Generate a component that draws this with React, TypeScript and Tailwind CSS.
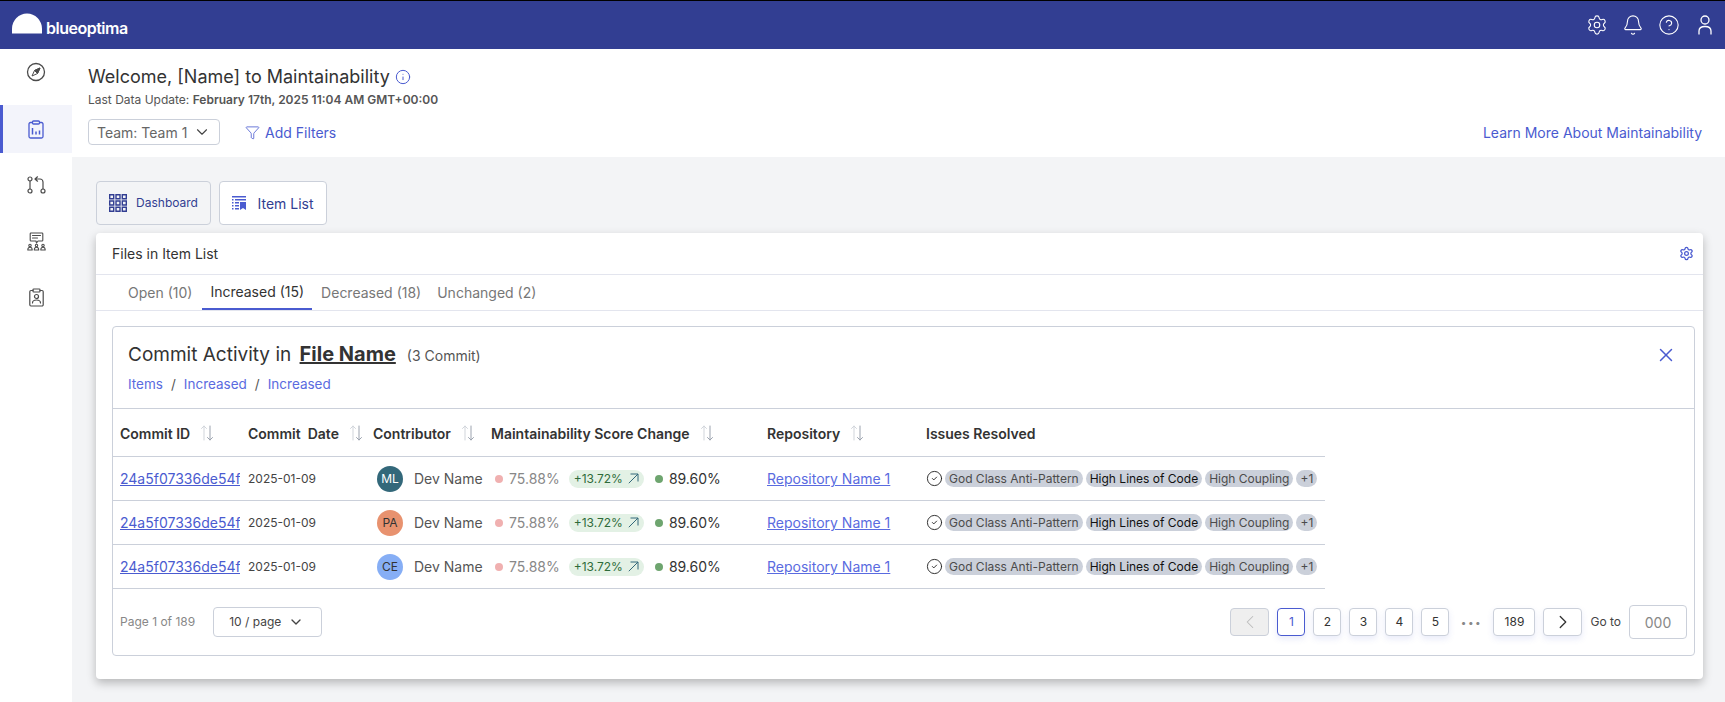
import React from 'react';
import { Settings, Bell, CircleHelp, ChevronDown, ChevronLeft, ChevronRight, Funnel, X, Info, CircleCheck } from 'lucide-react';

const rows = [
  { initials: 'ML', color: 'bg-[#33687a] text-white' },
  { initials: 'PA', color: 'bg-[#e8926f] text-[#333]' },
  { initials: 'CE', color: 'bg-[#86aef5] text-[#333]' },
];

const gridCols = 'grid grid-cols-[127px_125px_118px_276px_159px_407px] w-[1212px]';

const Sort = () => (
  <svg width="14" height="16" viewBox="0 0 14 16" fill="none" strokeWidth="1" strokeLinecap="round" strokeLinejoin="round" className="ml-2.5 shrink-0">
    <path d="M4 15V1M1.500 3.500 4 1l2.500 2.500" stroke="#d1d5db" />
    <path d="M10 1v14M7.500 12.500 10 15l2.500-2.500" stroke="#9ca3af" />
  </svg>
);

const CompassIcon = () => (
  <svg width="20" height="20" viewBox="0 0 20 20" fill="none" stroke="#4b4b4b" strokeWidth="1.300" strokeLinejoin="round">
    <circle cx="10" cy="10" r="8.500" />
    <path d="M14 6 8.500 8.500 6 14l5.500-2.500Z" strokeWidth="1" />
    <path d="M14 6 8.500 8.500l3 3Z" fill="#4b4b4b" strokeWidth="1" />
  </svg>
);

const ClipboardChart = () => (
  <svg width="16" height="19" viewBox="0 0 16 19" fill="none" stroke="#4a5bd0" strokeWidth="1.300" strokeLinejoin="round">
    <path d="M4.500 2.500H2.500a1.500 1.500 0 0 0-1.500 1.500v12.500A1.500 1.500 0 0 0 2.500 18h11a1.500 1.500 0 0 0 1.500-1.500V4a1.500 1.500 0 0 0-1.500-1.500h-2" />
    <rect x="4.500" y="1" width="7" height="3" rx="1" />
    <path d="M4.500 8v6.500M8 11.500v3M11.500 10.500v4" strokeWidth="1.500" />
  </svg>
);

const PullRequest = () => (
  <svg width="19" height="18" viewBox="0 0 19 18" fill="none" stroke="#4b4b4b" strokeWidth="1.200" strokeLinecap="round" strokeLinejoin="round">
    <circle cx="3" cy="3" r="2" />
    <circle cx="3" cy="15" r="2" />
    <circle cx="16" cy="15" r="2" />
    <path d="M3 5v8M16 13V6a3 3 0 0 0-3-3H8M10.500 .8 8 3l2.500 2.200" />
  </svg>
);

const TeamChat = () => (
  <svg width="19" height="19" viewBox="0 0 19 19" fill="none" stroke="#4b4b4b" strokeWidth="1.100" strokeLinecap="round" strokeLinejoin="round">
    <path d="M4 1h11a.8.8 0 0 1 .8.8v6.400a.8.8 0 0 1-.8.8h-4l-1.500 2-.5-2H4a.8.8 0 0 1-.8-.8V1.800A.8.8 0 0 1 4 1Z" />
    <path d="M5.500 3.500h8M5.500 6h5" />
    <circle cx="3" cy="13.500" r="1.200" />
    <circle cx="9.500" cy="13.500" r="1.200" />
    <circle cx="16" cy="13.500" r="1.200" />
    <path d="M.8 18c0-1.800 1-2.800 2.200-2.800S5.200 16.200 5.200 18ZM7.300 18c0-1.800 1-2.800 2.200-2.800s2.200 1 2.200 2.800ZM13.800 18c0-1.800 1-2.800 2.200-2.800s2.200 1 2.200 2.800Z" />
  </svg>
);

const ClipboardUser = () => (
  <svg width="15" height="19" viewBox="0 0 15 19" fill="none" stroke="#4b4b4b" strokeWidth="1.200" strokeLinecap="round" strokeLinejoin="round">
    <path d="M4 2.500H2A1.200 1.200 0 0 0 .8 3.700v13.100A1.200 1.200 0 0 0 2 18h11a1.200 1.200 0 0 0 1.200-1.200V3.700A1.200 1.200 0 0 0 13 2.500h-2" />
    <rect x="4" y="1" width="7" height="3" rx=".8" />
    <circle cx="7.500" cy="8.500" r="2" />
    <path d="M3.500 15c0-2 1.800-3 4-3s4 1 4 3" />
  </svg>
);

const ListIcon = () => (
  <svg width="14" height="14" viewBox="0 0 14 14" fill="#4a5bd0">
    <path d="M0 0h14v1.500H0zM0 3h1.500v1.500H0zM3 3h11v1.500H3zM0 6h1.500v1.500H0zM3 6h4v1.500H3zM0 9h1.500v1.500H0zM3 9h4v1.500H3zM0 12h1.500v1.500H0zM3 12h4v1.500H3z" />
    <path d="M8 6h6v8l-3-2-3 2z" />
  </svg>
);

const GridIcon = () => (
  <svg width="18" height="18" viewBox="0 0 18 18" fill="none" stroke="#323e92" strokeWidth="1.400">
    <path d="M.7.7h4v4h-4zM7 .7h4v4H7zM13.300 .7h4v4h-4zM.7 7h4v4h-4zM7 7h4v4H7zM13.300 7h4v4h-4zM.7 13.300h4v4h-4zM7 13.300h4v4H7zM13.300 13.300h4v4h-4z" />
  </svg>
);

const Chip = ({ label, dark }: { label: string; dark?: boolean }) => (
  <span className={`flex h-[17px] items-center rounded-full bg-[#cbd0da] px-1 text-[12px] ${dark ? 'text-[#111]' : 'text-[#4b4b4b]'}`}>{label}</span>
);

const PageBtn = ({ label, active }: { label: string; active?: boolean }) => (
  <button className={`h-7 min-w-[28px] rounded border bg-white px-2 text-[12px] shadow-[0_3px_6px_rgba(74,91,208,0.12)] ${active ? 'border-[#4a5bd0] text-[#4a5bd0]' : 'border-[#cbd0da] text-[#333]'}`}>{label}</button>
);

export default function App() {
  return (
    <div className="flex h-[702px] w-[1725px] flex-col overflow-hidden border-t border-black bg-[#f3f4f6] text-[#333] [font-family:Inter,'Noto_Sans',sans-serif]">
      <header className="flex h-[48px] shrink-0 items-center justify-between bg-[#323e92] pl-3 pr-[9px] text-white">
        <div className="flex items-center gap-[4px]">
          <svg width="30" height="21" viewBox="0 0 30 21" className="mb-[3px]"><path d="M0 20.500V16a15 15.500 0 0 1 30 0v4.500z" fill="#fff" /></svg>
          <span className="mt-[5px] text-[16px] font-semibold tracking-[-0.5px]">blueoptima</span>
        </div>
        <div className="flex items-center gap-[14px]">
          <Settings size={22} strokeWidth={1.200} />
          <Bell size={22} strokeWidth={1.200} />
          <CircleHelp size={22} strokeWidth={1.200} />
          <svg width="22" height="22" viewBox="0 0 22 22" fill="none" stroke="#fff" strokeWidth="1.300"><circle cx="11" cy="6" r="4" /><path d="M5 20.500V17c0-3 2.500-4.500 6-4.500s6 1.500 6 4.500v3.500" /></svg>
        </div>
      </header>

      <div className="flex min-h-0 flex-1">
        <nav className="flex w-[72px] shrink-0 flex-col bg-white">
          <div className="mb-[10px] flex h-[46px] items-center justify-center"><CompassIcon /></div>
          <div className="flex h-[48px] items-center justify-center border-l-[3px] border-[#4a5bd0] bg-[#f3f4fb] pr-[3px]"><ClipboardChart /></div>
          <div className="flex h-[56px] items-center justify-center pt-[8px]"><PullRequest /></div>
          <div className="flex h-[56px] items-center justify-center pt-[8px]"><TeamChat /></div>
          <div className="flex h-[56px] items-center justify-center pt-[8px]"><ClipboardUser /></div>
        </nav>

        <main className="min-w-0 flex-1">
          <section className="h-[108px] bg-white pl-[16px] pr-[23px] pt-[16px]">
            <div className="flex items-center gap-[5px]">
              <h1 className="text-[18px] leading-6">Welcome, [Name] to Maintainability</h1>
              <Info size={16} strokeWidth={1.500} className="text-[#4a5bd0]" />
            </div>
            <p className="mt-[3px] text-[12px] leading-4 text-[#555]">Last Data Update: <span className="font-semibold">February 17th, 2025 11:04 AM GMT+00:00</span></p>
            <div className="mt-[11px] flex items-center justify-between">
              <div className="flex items-center">
                <button className="flex h-[26px] w-[132px] items-center justify-between rounded border border-[#cbd0da] pl-2 pr-2 text-[14px] text-[#666]">Team: Team 1 <ChevronDown size={18} strokeWidth={1.500} className="text-[#444]" /></button>
                <button className="ml-[25px] flex items-center gap-[5px] text-[14px] text-[#4a5bd0]"><Funnel size={15} strokeWidth={1.300} /> Add Filters</button>
              </div>
              <a className="text-[14px] text-[#4a5bd0]">Learn More About Maintainability</a>
            </div>
          </section>

          <section className="pl-[24px] pr-[22px] pt-[24px]">
            <div className="flex gap-2">
              <button className="flex h-[44px] w-[115px] items-center justify-center gap-[9px] rounded border border-[#cbd0da] text-[12px] text-[#323e92]"><GridIcon />Dashboard</button>
              <button className="flex h-[44px] w-[108px] items-center justify-center gap-[11px] rounded border border-[#cbd0da] bg-white text-[14px] text-[#323e92]"><ListIcon />Item List</button>
            </div>

            <div className="mt-2 h-[446px] rounded bg-white shadow-[0_4px_10px_rgba(0,0,0,0.25)]">
              <div className="flex h-[42px] items-center justify-between border-b border-[#e3e5ee] pl-4 pr-[9px] text-[14px]">
                Files in Item List
                <Settings size={15} className="text-[#4a5bd0]" />
              </div>
              <div className="flex h-[36px] items-stretch border-b border-[#e3e5ee] pl-[16px] text-[14px] text-[#777]">
                <span className="flex items-center pl-4 pr-[10px]">Open (10)</span>
                <span className="flex items-center border-b-2 border-[#4a5bd0] px-[8px] text-[#333]">Increased (15)</span>
                <span className="flex items-center pl-[9px] pr-2">Decreased (18)</span>
                <span className="flex items-center px-2">Unchanged (2)</span>
              </div>

              <div className="ml-4 mr-2 mt-[15px] h-[330px] rounded border border-[#cbd0da]">
                <div className="h-[82px] border-b border-[#cbd0da] pl-[15px] pr-[17px] pt-[15px]">
                  <div className="flex items-center justify-between">
                    <div className="flex items-baseline">
                      <span className="text-[19px] leading-6">Commit Activity in <span className="ml-[3px] text-[20px] font-bold underline">File Name</span></span>
                      <span className="ml-[11px] text-[14px] text-[#555]">(3 Commit)</span>
                    </div>
                    <X size={22} strokeWidth={1.600} className="text-[#4a5bd0]" />
                  </div>
                  <div className="mt-[7px] flex gap-2 text-[13.500px] text-[#5a6be0]">
                    <span>Items</span><span className="text-[#555]">/</span><span>Increased</span><span className="text-[#555]">/</span><span>Increased</span>
                  </div>
                </div>

                <div className={`${gridCols} h-[48px] items-center border-b border-[#cbd0da] pt-px text-[14px] font-semibold`}>
                  <div className="flex items-center pl-[7px]">Commit ID<Sort /></div>
                  <div className="flex items-center whitespace-pre pl-2">Commit  Date<Sort /></div>
                  <div className="flex items-center pl-2">Contributor<Sort /></div>
                  <div className="flex items-center pl-2">Maintainability Score Change<Sort /></div>
                  <div className="flex items-center pl-2">Repository<Sort /></div>
                  <div className="pl-2">Issues Resolved</div>
                </div>

                {rows.map((r) => (
                  <div key={r.initials} className={`${gridCols} h-[44px] items-center border-b border-[#cbd0da] text-[14px]`}>
                    <a className="overflow-hidden whitespace-nowrap pl-[7px] text-[#4a5bd0] underline">24a5f07336de54f</a>
                    <span className="pl-2 text-[12px] text-[#444]">2025-01-09</span>
                    <div className="flex items-center gap-[11px] pl-3">
                      <span className={`flex h-[26px] w-[26px] shrink-0 items-center justify-center rounded-full text-[12px] ${r.color}`}>{r.initials}</span>
                      <span className="whitespace-nowrap text-[#555]">Dev Name</span>
                    </div>
                    <div className="flex items-center pl-3">
                      <span className="h-2 w-2 rounded-full bg-[#f0b0b0]" />
                      <span className="ml-[6px] text-[#888]">75.88%</span>
                      <span className="ml-[9px] flex h-[18px] items-center gap-[5px] rounded-full bg-[#e3f1e5] px-[5px] text-[12px] text-[#2e6b3a]">+13.72%
                        <svg width="11" height="11" viewBox="0 0 11 11" fill="none" stroke="#33687a" strokeWidth="1"><path d="M.8 10.200 10 1M2.500 1H10v7.500" /></svg>
                      </span>
                      <span className="ml-[11px] h-2 w-2 rounded-full bg-[#6ea56f]" />
                      <span className="ml-[6px]">89.60%</span>
                    </div>
                    <a className="pl-2 text-[#5a6be0] underline">Repository Name 1</a>
                    <div className="flex items-center gap-[3px] pl-[8px]">
                      <CircleCheck size={17} strokeWidth={1.300} className="mr-[-1px] text-[#222]" />
                      <Chip label="God Class Anti-Pattern" />
                      <Chip label="High Lines of Code" dark />
                      <Chip label="High Coupling" />
                      <Chip label="+1" />
                    </div>
                  </div>
                ))}

                <div className="flex items-center justify-between pl-[7px] pr-[7px] pt-[16px]">
                  <div className="flex items-center gap-[18px]">
                    <span className="text-[12px] text-[#888]">Page 1 of 189</span>
                    <button className="flex h-[30px] w-[109px] items-center justify-between rounded border border-[#cbd0da] pl-[15px] pr-[17px] text-[12px] text-[#444]">10 / page <ChevronDown size={16} /></button>
                  </div>
                  <div className="flex items-center gap-2">
                    <button className="flex h-7 w-[39px] items-center justify-center rounded border border-[#cbd0da] bg-[#efefef] text-[#bbb]"><ChevronLeft size={22} strokeWidth={1.100} /></button>
                    <PageBtn label="1" active />
                    <PageBtn label="2" />
                    <PageBtn label="3" />
                    <PageBtn label="4" />
                    <PageBtn label="5" />
                    <span className="w-[28px] text-center text-[10px] tracking-[1.500px] text-[#888]">•••</span>
                    <button className="h-7 w-[42px] rounded border border-[#cbd0da] bg-white text-[12px] text-[#333] shadow-[0_3px_6px_rgba(74,91,208,0.12)]">189</button>
                    <button className="flex h-7 w-[39px] items-center justify-center rounded border border-[#cbd0da] bg-white text-[#333] shadow-[0_3px_6px_rgba(74,91,208,0.12)]"><ChevronRight size={22} strokeWidth={1.400} /></button>
                    <span className="text-[12px] text-[#444]">Go to</span>
                    <span className="flex h-[34px] w-[58px] items-center justify-center rounded border border-[#cbd0da] text-[14px] text-[#888]">000</span>
                  </div>
                </div>
              </div>
            </div>
          </section>
        </main>
      </div>
    </div>
  );
}
